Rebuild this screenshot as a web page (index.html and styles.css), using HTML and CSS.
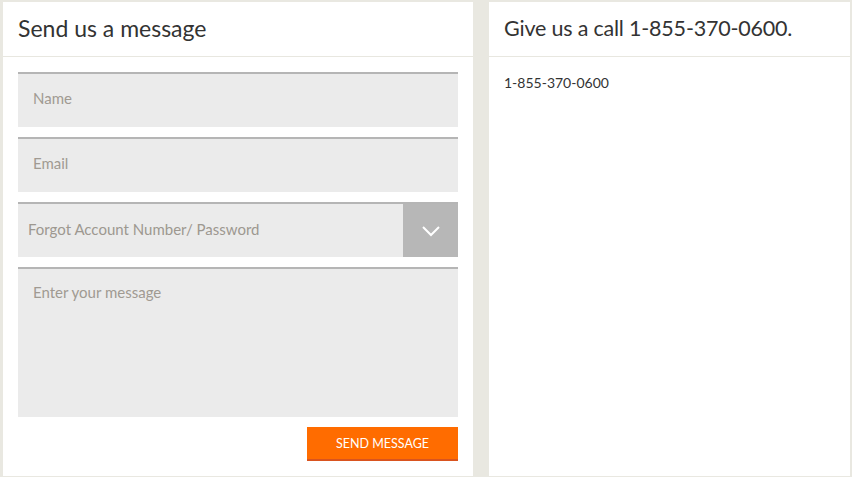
FILE: index.html
```html
<!DOCTYPE html>
<html>
<head>
<meta charset="utf-8">
<link rel="stylesheet" href="styles.css">
</head>
<body>
<div class="page">
  <section class="panel panel-form">
    <h2 class="panel-title">Send us a message</h2>
    <form class="form">
      <div class="field"><input class="input" type="text" placeholder="Name"></div>
      <div class="field"><input class="input" type="text" placeholder="Email"></div>
      <div class="field select">
        <span class="select-label">Forgot Account Number/ Password</span>
        <span class="select-arrow">
          <svg width="20" height="12" viewBox="0 0 20 12"><path d="M2 2 L10 10 L18 2" fill="none" stroke="#fff" stroke-width="2"/></svg>
        </span>
      </div>
      <div class="field field-area"><textarea class="textarea" placeholder="Enter your message"></textarea></div>
      <div class="actions"><button class="btn" type="button">SEND MESSAGE</button></div>
    </form>
  </section>
  <section class="panel panel-call">
    <h2 class="panel-title">Give us a call 1-855-370-0600.</h2>
    <div class="call-body">1-855-370-0600</div>
  </section>
</div>
</body>
</html>
```
FILE: styles.css
```css
html, body { margin: 0; padding: 0; }
body {
  background: #e9e8e1;
  font-family: "Lato", "Open Sans", sans-serif;
  color: #333;
  width: 852px;
  height: 477px;
  overflow: hidden;
}
.page {
  display: flex;
  gap: 16px;
  padding: 2px 2px 1px 3px;
  height: 477px;
  box-sizing: border-box;
}
.panel {
  background: #fff;
  display: flex;
  flex-direction: column;
}
.panel-form { width: 470px; }
.panel-call { width: 361px; }
.panel-title {
  margin: 0;
  height: 54px;
  line-height: 52px;
  padding: 0 15px;
  font-size: 22px;
  font-weight: 400;
  color: #333;
  border-bottom: 1px solid #e8e7e0;
}
.panel-form .panel-title { font-size: 23px; }
.panel-call .panel-title { font-size: 21.5px; letter-spacing: -0.2px; }
.form {
  padding: 15px 15px 0 15px;
  display: flex;
  flex-direction: column;
  gap: 10px;
}
.field {
  background: #ebebeb;
  border-top: 2px solid #b5b5b5;
  height: 53px;
  display: flex;
}
.input, .textarea {
  border: 0;
  background: transparent;
  font: inherit;
  font-size: 15px;
  color: #333;
  width: 100%;
  outline: none;
  padding: 0 15px 5px;
}
.input::placeholder, .textarea::placeholder { color: #a09a92; opacity: 1; }
.select { align-items: stretch; }
.select-label {
  flex: 1;
  display: flex;
  align-items: center;
  padding-left: 10px;
  padding-bottom: 3px;
  font-size: 15px;
  color: #9d9890;
}
.select-arrow {
  width: 55px;
  background: #b7b7b7;
  display: flex;
  align-items: center;
  justify-content: center;
}
.field-area { height: 148px; }
.textarea {
  resize: none;
  padding: 14px 15px;
  height: 100%;
  box-sizing: border-box;
}
.actions {
  display: flex;
  justify-content: flex-end;
}
.btn {
  width: 151px;
  height: 34px;
  background: #ff6c00;
  color: #fff;
  border: 0;
  border-bottom: 2px solid #d9541f;
  font: inherit;
  font-size: 12.5px;
  padding: 0;
}
.call-body {
  padding: 17px 15px;
  font-size: 14px;
  color: #333;
}
```
